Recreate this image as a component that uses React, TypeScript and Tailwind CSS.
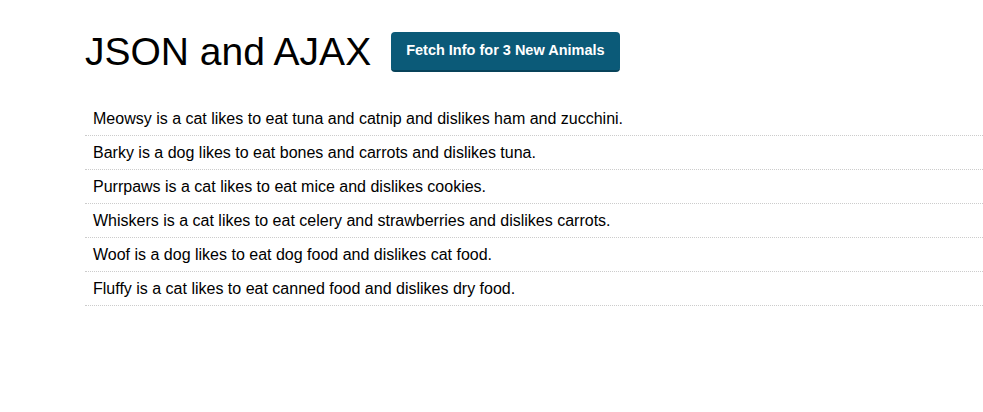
const ANIMALS = [
  'Meowsy is a cat likes to eat tuna and catnip and dislikes ham and zucchini.',
  'Barky is a dog likes to eat bones and carrots and dislikes tuna.',
  'Purrpaws is a cat likes to eat mice and dislikes cookies.',
  'Whiskers is a cat likes to eat celery and strawberries and dislikes carrots.',
  'Woof is a dog likes to eat dog food and dislikes cat food.',
  'Fluffy is a cat likes to eat canned food and dislikes dry food.',
]

export default function App() {
  return (
    <div className="min-h-[412px] bg-white pl-[85px] font-['Liberation_Sans',Arial,sans-serif] text-black">
      {/* Header */}
      <div className="flex items-center gap-[20px] pt-[32px]">
        <h1 className="text-[39px] leading-[40px] font-normal">JSON and AJAX</h1>
        <button className="h-[40px] rounded-[4px] border-b-2 border-[#08435a] bg-[#0b5a78] px-[15px] text-[14.5px] font-bold text-white">
          Fetch Info for 3 New Animals
        </button>
      </div>

      <div className="mt-[30px]">
        {ANIMALS.map((a) => (
          <p key={a} className="h-[34px] border-b border-dotted border-[#cccccc] px-2 pt-[7px] text-[16px] leading-[20px]">
            {a}
          </p>
        ))}
      </div>
    </div>
  )
}
